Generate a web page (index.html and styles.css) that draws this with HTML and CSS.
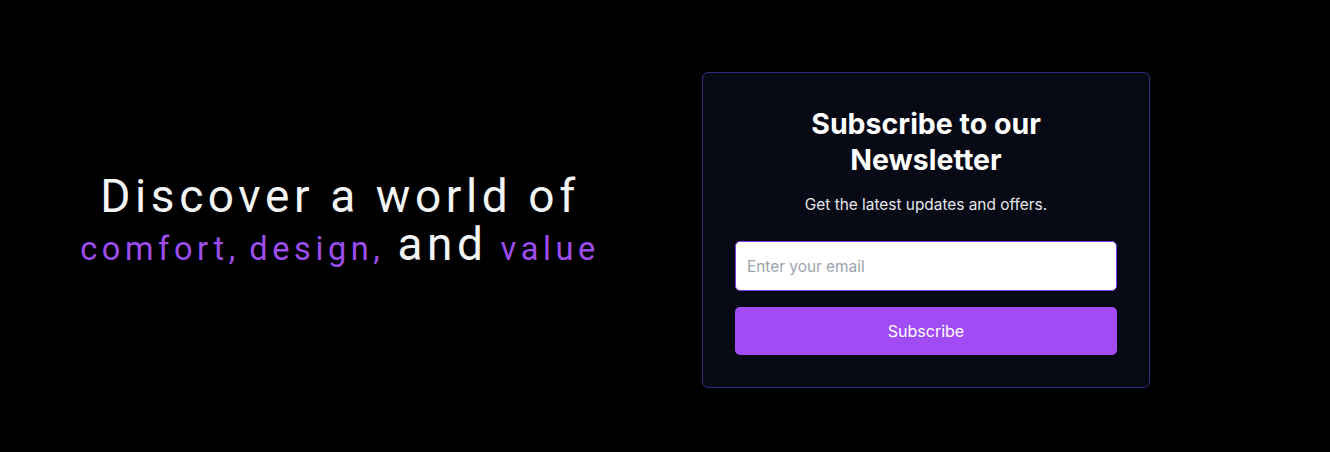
FILE: index.html
```html
<!DOCTYPE html>
<html lang="en">
<head>
<meta charset="utf-8">
<title>Newsletter</title>
<link rel="stylesheet" href="styles.css">
</head>
<body>
<main class="page">
  <section class="hero">
    <h1 class="hero-line1">Discover a world of</h1>
    <p class="hero-line2"><span class="accent">comfort, design,</span> <span class="plain">and</span> <span class="accent">value</span></p>
  </section>
  <section class="card">
    <h2 class="card-title">Subscribe to our Newsletter</h2>
    <p class="card-sub">Get the latest updates and offers.</p>
    <form class="form">
      <input class="email" type="email" placeholder="Enter your email">
      <button class="btn" type="button">Subscribe</button>
    </form>
  </section>
</main>
</body>
</html>
```
FILE: styles.css
```css
* { box-sizing: border-box; }
html, body { margin: 0; padding: 0; background: #000; }
body { font-family: Inter, "Noto Sans", sans-serif; color: #fff; }
.page {
  height: 452px;
  display: grid;
  grid-template-columns: 680px 448px;
  column-gap: 22px;
  align-items: start;
  padding-top: 72px;
}
.hero {
  text-align: center;
  padding-top: 100px;
  font-family: Roboto, "Liberation Sans", sans-serif;
}
.hero-line1 {
  margin: 0;
  font-weight: 400;
  font-size: 46px;
  line-height: 48px;
  letter-spacing: 0.1em;
  color: #f3f4f6;
}
.hero-line2 {
  margin: 0;
  font-size: 46px;
  line-height: 48px;
  letter-spacing: 0.1em;
  word-spacing: -3px;
}
.accent { color: #9d4ded; font-size: 32.5px; }
.plain { color: #f3f4f6; }
.card {
  border: 1px solid #312e81;
  border-radius: 6px;
  background: #070a15;
  padding: 32px;
  text-align: center;
}
.card-title {
  margin: 0 auto;
  padding-top: 1px;
  max-width: 260px;
  font-size: 28.5px;
  line-height: 36px;
  font-weight: 700;
}
.card-sub {
  margin: 15px 0 0;
  font-size: 15.4px;
  line-height: 24px;
  color: #e5e7eb;
}
.form {
  margin-top: 24px;
  display: flex;
  flex-direction: column;
  gap: 16px;
}
.email {
  display: block;
  width: 100%;
  height: 50px;
  padding: 0 11px;
  border: 1px solid #7c3aed;
  border-radius: 5px;
  background: #fff;
  font-family: inherit;
  font-size: 15.4px;
  color: #111827;
  outline: none;
}
.email::placeholder { color: #9ca3af; }
.btn {
  display: block;
  width: 100%;
  height: 48px;
  border: 0;
  border-radius: 5px;
  background: #a04bf3;
  color: #fff;
  font-family: inherit;
  font-size: 16px;
  font-weight: 400;
}
```
